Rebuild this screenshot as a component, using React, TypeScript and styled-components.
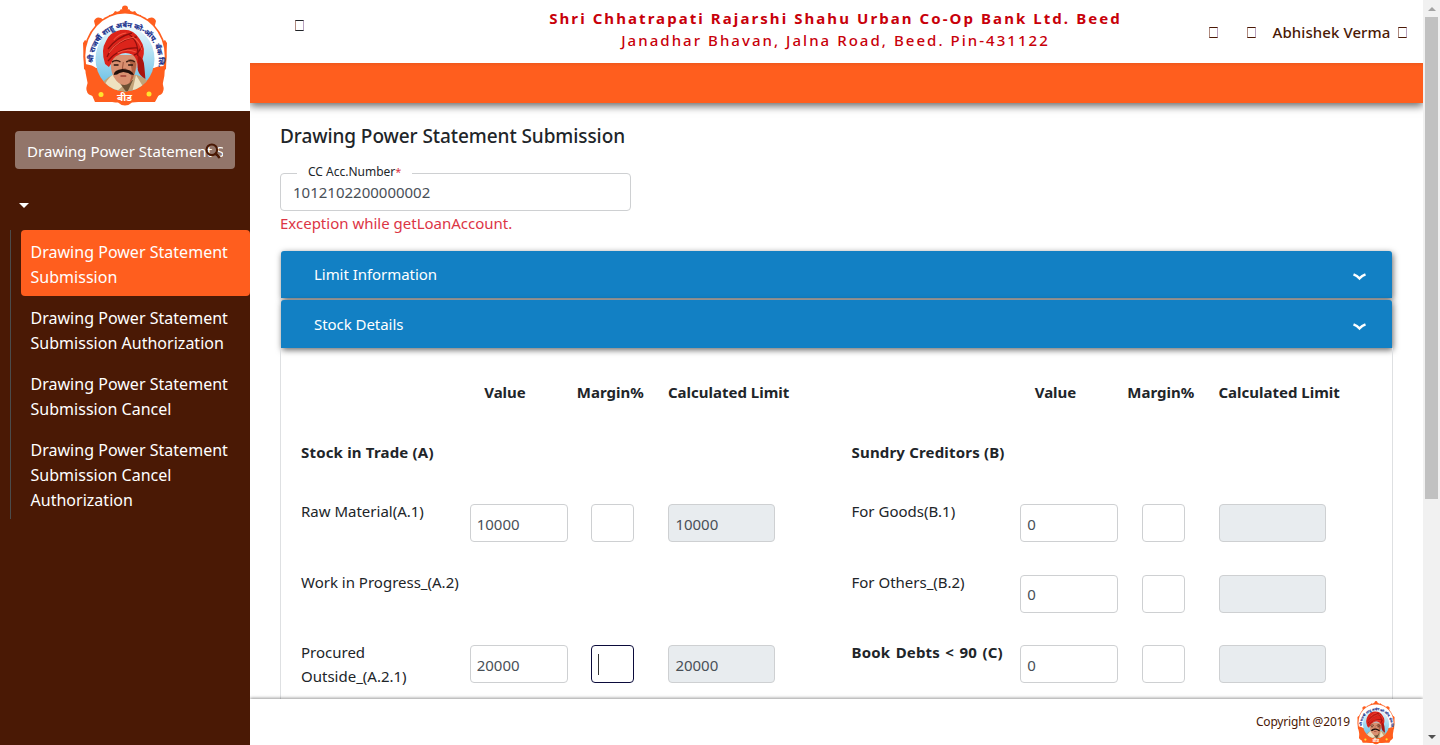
import React from 'react';
import styled, { createGlobalStyle, css } from 'styled-components';

const colors = {
  brand: '#ff5e1e',
  brown: '#4a1905',
  blue: '#1280c4',
  red: '#c8000a',
  text: '#212529',
  input: '#495057',
  border: '#ced0d2',
};

const GlobalStyle = createGlobalStyle`
  *, *::before, *::after { box-sizing: border-box; }
  body {
    margin: 0;
    overflow: hidden;
    background: #fff;
    color: ${colors.text};
    font: 400 15px/24px "Noto Sans", "Open Sans", sans-serif;
  }
  input { font: inherit; }
`;

/* ---------- shell ---------- */

const Shell = styled.div`
  display: flex;
  height: 745px;
  overflow: hidden;
`;

const Sidebar = styled.aside`
  width: 250px;
  flex: none;
  background: ${colors.brown};
  color: #fff;
`;

const LogoPanel = styled.div`
  height: 111px;
  padding-left: 70px;
  background: #fff;
`;

const SearchBox = styled.div`
  position: relative;
  margin: 20px 15px 0;
  height: 38px;
  padding: 0 12px;
  border-radius: 4px;
  background: #92756a;
`;

const SearchInput = styled.input`
  display: block;
  width: 196px;
  height: 38px;
  padding: 2px 0 0;
  border: 0;
  outline: none;
  background: transparent;
  color: #fff;
  letter-spacing: 0.02px;
`;

const SearchIcon = styled.svg`
  position: absolute;
  left: 190px;
  top: 12px;
`;

const MenuToggle = styled.div`
  height: 61px;
  padding: 34px 0 0 19px;
`;

const Caret = styled.div`
  width: 0;
  border: 5.5px solid transparent;
  border-top: 5px solid #fff;
  border-bottom: 0;
`;

const Menu = styled.nav`
  margin-left: 10px;
  padding-left: 10px;
  height: 289px;
  border-left: 1px solid #4b4b4b;
`;

const MenuItem = styled.div<{ $active?: boolean }>`
  padding: 10px 9px 6px 9.5px;
  border-radius: 4px;
  font-size: 16px;
  line-height: 25px;
  letter-spacing: 0.02px;
  background: ${p => (p.$active ? colors.brand : 'transparent')};
`;

const Page = styled.div`
  flex: 1;
  min-width: 0;
  display: flex;
  flex-direction: column;
`;

/* ---------- header ---------- */

const Header = styled.header`
  flex: none;
  height: 63px;
  display: flex;
  padding: 0 16.5px 0 44.5px;
`;

const MissingGlyph = styled.i`
  flex: none;
  width: 9px;
  height: 11px;
  border: 1px solid currentColor;
  border-left-color: #b08b80;
  border-right-color: #b9a3c0;
`;

const MenuButton = styled.div`
  width: 200px;
  padding-top: 20px;
`;

const BankName = styled.div`
  flex: 1;
  padding-top: 7px;
  text-align: center;
  white-space: nowrap;
  line-height: 22px;
  letter-spacing: 2.04px;
  font-weight: 500;
  color: ${colors.red};

  strong {
    display: block;
    font-weight: 700;
    letter-spacing: 2.07px;
  }
`;

const UserArea = styled.div`
  width: 230px;
  height: 65px;
  display: flex;
  align-items: center;
  justify-content: flex-end;
  color: ${colors.brown};
`;

const UserName = styled.span`
  margin: 0 7px 2px 17px;
  font-weight: 500;
  letter-spacing: 0.08px;
`;

const HeaderGap = styled.span`
  width: 29px;
`;

const BrandBar = styled.div`
  flex: none;
  height: 40px;
  background: linear-gradient(#f0581c, ${colors.brand} 4px);
  box-shadow: 0 3px 8px rgba(0, 0, 0, 0.6);
  clip-path: inset(0 0 -20px 0);
`;

/* ---------- content ---------- */

const Content = styled.main`
  flex: 1;
  min-height: 0;
  overflow: hidden;
  padding: 19px 30px 0;
`;

const Title = styled.h1`
  margin: 0 0 23px;
  font-size: 19px;
  line-height: 28px;
  font-weight: 500;
  letter-spacing: -0.08px;
`;

const AccountField = styled.div`
  position: relative;
  width: 351px;
`;

const FieldLabel = styled.label`
  position: absolute;
  left: 17px;
  top: -10px;
  padding: 0 11px;
  background: #fff;
  font-size: 12px;
  line-height: 18px;

  em {
    color: #dc3545;
    font-style: normal;
    font-size: 11px;
  }
`;

const Input = styled.input<{ $width: number; $wide?: boolean; $off?: boolean; $focused?: boolean }>`
  display: block;
  width: ${p => p.$width}px;
  height: 38px;
  padding: ${p => (p.$wide ? '0 12px 1px' : '1px 6px 0')};
  border: 1px solid ${colors.border};
  border-radius: 4px;
  outline: none;
  color: ${colors.input};
  background: ${p => (p.$off ? '#e8ecef' : '#fff')};
  ${p => p.$focused && css`border-color: #0b0b3b;`}
`;

const ErrorText = styled.div`
  height: 40px;
  color: #dc3545;
`;

const AccordionHead = styled.div<{ $height: number }>`
  height: ${p => p.$height}px;
  margin: 0 1px ${p => (p.$height === 47 ? 2 : 0)}px;
  padding: 0 26px 1px 33px;
  display: flex;
  align-items: center;
  justify-content: space-between;
  border-radius: 3px 3px 0 0;
  background: ${colors.blue};
  box-shadow: 1px 2px 6px rgba(0, 0, 0, 0.6);
  color: #fff;
  letter-spacing: -0.05px;
`;

const StockPanel = styled.section`
  height: 480px;
  display: grid;
  grid-template-columns: 550.5px 1fr;
  padding: 28px 0 0 20px;
  border: 1px solid #dee0e2;
  border-width: 0 1px;
`;

const LineRow = styled.div<{ $height: number }>`
  height: ${p => p.$height}px;
  display: grid;
  grid-template-columns: 168.7px 121.6px 77.1px 150px;
`;

const RowLabel = styled.div<{ $bold?: boolean; $spread?: boolean }>`
  font-weight: ${p => (p.$bold ? 700 : 400)};
  letter-spacing: ${p => (p.$bold ? 0.18 : 0)}px;
  word-spacing: ${p => (p.$spread ? 1.3 : 0)}px;
  white-space: pre;
`;

const HeadCell = styled.div<{ $shift: number }>`
  padding-left: ${p => p.$shift}px;
  margin-left: ${p => (p.$shift ? -0.5 : -14.5)}px;
  padding-top: 4px;
  font-weight: 700;
  white-space: nowrap;
`;

const Cell = styled.div`
  position: relative;
  padding-top: 5px;
`;

const TextCursor = styled.span`
  position: absolute;
  left: 7px;
  top: 14px;
  width: 1px;
  height: 21px;
  background: #333;
`;

/* ---------- footer and scrollbar ---------- */

const Footer = styled.footer`
  position: relative;
  flex: none;
  height: 46px;
  display: flex;
  align-items: center;
  justify-content: flex-end;
  gap: 3px;
  padding-right: 24px;
  background: #fff;
  box-shadow: 0 -1px 3px rgba(0, 0, 0, 0.4);
  clip-path: inset(-10px 0 0 0);
  color: ${colors.brown};
  font-size: 12px;
  letter-spacing: -0.17px;
`;

const Scrollbar = styled.div`
  width: 17px;
  flex: none;
  display: flex;
  flex-direction: column;
  align-items: center;
  justify-content: space-between;
  background: #f1f1f1;
`;

const ScrollArrow = styled.div<{ $down?: boolean }>`
  height: 17px;
  display: flex;
  align-items: center;

  &::before {
    content: '';
    border: 4px solid transparent;
    ${p =>
      p.$down
        ? 'border-top-color: #505050; border-bottom: 0;'
        : 'border-bottom-color: #a3a3a3; border-top: 0;'}
  }
`;

const ScrollThumb = styled.div`
  width: 13px;
  height: 482px;
  margin-bottom: auto;
  background: #c1c1c1;
`;

/* ---------- drawings ---------- */

function BankLogo({ width, height, id, viewBox }: { width: number; height: number; id: string; viewBox: string }) {
  return (
    <svg width={width} height={height} viewBox={viewBox} preserveAspectRatio="none">
      <defs>
        <path id={`${id}-arc`} d="M23 66A33 35.5 0 1 1 88.5 68" />
        <clipPath id={`${id}-clip`}>
          <ellipse cx="55" cy="59" rx="29.5" ry="32.5" />
        </clipPath>
        <linearGradient id={`${id}-sky`} x1="0" y1="0" x2="0" y2="1">
          <stop offset="0" stopColor="#eef9fd" />
          <stop offset="1" stopColor="#58b9e2" />
        </linearGradient>
      </defs>
      <g fill={colors.brand}>
        <circle cx="55" cy="8.5" r="3" />
        <path d="M39 15q4 0 6-4q4 2 6-2q2 2 4-1q2 3 4 1q2 4 6 2q2 4 6 4v4H39z" />
        <path d="M24 21q2-5 7-3l4 3-9 8zM86 21q-2-5-7-3l-4 3 9 8z" />
        <path d="M13 43l2-3 3 2v30l-4-3zM97 43l-2-3-3 2v30l4-3z" />
        <path d="M17 85q-2 6 2 9.500q3 2 8 2q5 0 8 4q8 2 13 2q3 3 7 3q4 0 7-3q6 0 13-2q3-4 8-4q5 0 8-2q4-3.500 2-9.500q-3-5 0-11H17q3 6 0 11z" />
        <ellipse cx="55" cy="56.5" rx="41.5" ry="44.5" />
      </g>
      <ellipse cx="55" cy="56" rx="39.7" ry="42.5" fill="#fff" />
      <path d="M15 64q8 1 11 4h58q3-2 11-2q0 20-10 36H25Q15 82 15 64z" fill={colors.brand} />
      <g clipPath={`url(#${id}-clip)`}>
        <rect x="24" y="26" width="62" height="67" fill={`url(#${id}-sky)`} />
        <path d="M28 93q3-14 17-19l22 1q13 4 18 18z" fill="#c3a378" />
        <path d="M45 73l8 13-8 7H31q4-13 14-20zM66 75l-4 18h15z" fill="#eee1c0" />
        <path d="M49 82l8 11 6-13z" fill="#6d5134" />
      </g>
      <g transform="translate(1.5 1) scale(.96 1)">
        <path d="M41 54q-1 16 3 22q5 8 11 8t9-7q5-9 5-23z" fill="#d99070" />
        <path d="M59 58q10-1 8 9q-2 11-7 16q6-15-1-25z" fill="#b26344" />
        <path d="M42 61q5-3 9 0M57 61q5-3 9 0" fill="none" stroke="#3b1d12" strokeWidth="1.5" />
        <path d="M44 64h5M59 64h5" stroke="#29130d" strokeWidth="1.6" />
        <path d="M54 61l-1 7h4" fill="none" stroke="#9d5139" />
        <path d="M44 74q0-5 9-6q10 0 12 6q-4 0-6-2l-5-1-4 1q-2 2-6 2z" fill="#22100b" />
        <path d="M51 75h6" stroke="#93302a" strokeWidth="1.3" />
        <path d="M35 63q-5-14 1-23q4-9 15-11q13-2 20 9q7 9 3 20q-1 6-5 9q0-9-5-13q-8-4-15 0q-6 2-8 9l-2 3z" fill="#dc241b" />
        <path d="M69 54q7 3 7 13l1 11q-6-3-8-9z" fill="#a9150f" />
        <g fill="none" stroke="#8e0f0c" strokeWidth="1.3">
          <path d="M37 56q8-17 31-20M38 48q9-12 25-16M38 60q12-14 31-13M59 33q11 6 10 22M73 45q-3 8-8 9" />
        </g>
        <g fill="none" stroke="#f4543f" strokeWidth="1.1">
          <path d="M39 52q9-13 26-16M44 39q5-6 13-7M48 52q10-5 19-1M64 36q8 6 9 13" />
        </g>
      </g>
      <text fill="#17308c" stroke="#17308c" strokeWidth=".2" fontSize="7" fontWeight="700" fontFamily="Noto Sans, sans-serif">
        <textPath href={`#${id}-arc`} startOffset="3" textLength="112" lengthAdjust="spacingAndGlyphs">
          श्री राजर्षी शाहू अर्बन को-ऑप. बँक लि.
        </textPath>
      </text>
      <circle cx="31" cy="94.5" r="2.5" fill="#ffe52e" />
      <circle cx="79" cy="94" r="2.5" fill="#ffe52e" />
      <text x="54.500" y="101" textAnchor="middle" fill="#fff" fontSize="10" fontWeight="700" fontFamily="Noto Sans, sans-serif">
        बीड
      </text>
    </svg>
  );
}

const Chevron = () => (
  <svg width="14" height="8" viewBox="0 0 14 8" transform="translate(0.5 3)">
    <path d="M1 1.4Q4.5 2.8 7 5.4Q9.5 2.8 13 1.4" fill="none" stroke="#fff" strokeWidth="2.5" />
  </svg>
);

/* ---------- data ---------- */

type Line = { label: string; bold?: boolean; value?: string; calc?: string; focused?: boolean };

const stock: Line[] = [
  { label: 'Raw Material(A.1)', value: '10000', calc: '10000' },
  { label: 'Work in Progress_(A.2)' },
  { label: 'Procured\nOutside_(A.2.1)', value: '20000', calc: '20000', focused: true },
];

const creditors: Line[] = [
  { label: 'For Goods(B.1)', value: '0', calc: '' },
  { label: 'For Others_(B.2)', value: '0', calc: '' },
  { label: 'Book Debts < 90 (C)', bold: true, value: '0', calc: '' },
];

const menu = [
  'Drawing Power Statement Submission',
  'Drawing Power Statement Submission Authorization',
  'Drawing Power Statement Submission Cancel',
  'Drawing Power Statement Submission Cancel Authorization',
];

function Ledger({ heading, lines }: { heading: string; lines: Line[] }) {
  return (
    <div>
      <LineRow $height={64}>
        <span />
        <HeadCell $shift={15}>Value</HeadCell>
        <HeadCell $shift={0}>Margin%</HeadCell>
        <HeadCell $shift={0.1}>Calculated Limit</HeadCell>
      </LineRow>
      <LineRow $height={59}>
        <RowLabel $bold>{heading}</RowLabel>
      </LineRow>
      {lines.map(line => (
        <LineRow key={line.label} $height={70.5}>
          <RowLabel $bold={line.bold} $spread={line.bold}>{line.label}</RowLabel>
          {line.value !== undefined && (
            <>
              <Cell><Input $width={98} defaultValue={line.value} /></Cell>
              <Cell>
                <Input $width={43} $focused={line.focused} />
                {line.focused && <TextCursor />}
              </Cell>
              <Cell><Input $width={107} $off readOnly value={line.calc} /></Cell>
            </>
          )}
        </LineRow>
      ))}
    </div>
  );
}

export default function App() {
  return (
    <>
      <GlobalStyle />
      <Shell>
        <Sidebar>
          <LogoPanel>
            <BankLogo width={110} height={111} id="main" viewBox="0 0 110 111" />
          </LogoPanel>
          <SearchBox>
            <SearchInput defaultValue="Drawing Power Statement Submission" />
            <SearchIcon width="16" height="16" viewBox="0 0 16 16">
              <circle cx="6.8" cy="6.8" r="5.3" fill="none" stroke={colors.brown} strokeWidth="2.1" />
              <path d="M10.5 10.5l4.3 4.3" stroke={colors.brown} strokeWidth="2.6" />
            </SearchIcon>
          </SearchBox>
          <MenuToggle><Caret /></MenuToggle>
          <Menu>
            {menu.map((item, i) => <MenuItem key={item} $active={i === 0}>{item}</MenuItem>)}
          </Menu>
        </Sidebar>
        <Page>
          <Header>
            <MenuButton><MissingGlyph as="div" /></MenuButton>
            <BankName>
              <strong>Shri Chhatrapati Rajarshi Shahu Urban Co-Op Bank Ltd. Beed</strong>
              Janadhar Bhavan, Jalna Road, Beed. Pin-431122
            </BankName>
            <UserArea>
              <MissingGlyph />
              <HeaderGap />
              <MissingGlyph />
              <UserName>Abhishek Verma</UserName>
              <MissingGlyph />
            </UserArea>
          </Header>
          <BrandBar />
          <Content>
            <Title>Drawing Power Statement Submission</Title>
            <AccountField>
              <Input $width={351} $wide defaultValue="1012102200000002" />
              <FieldLabel>CC Acc.Number<em>*</em></FieldLabel>
            </AccountField>
            <ErrorText>Exception while getLoanAccount.</ErrorText>
            <AccordionHead $height={47}>Limit Information<Chevron /></AccordionHead>
            <AccordionHead $height={48}>Stock Details<Chevron /></AccordionHead>
            <StockPanel>
              <Ledger heading="Stock in Trade (A)" lines={stock} />
              <Ledger heading="Sundry Creditors (B)" lines={creditors} />
            </StockPanel>
          </Content>
          <Footer>
            Copyright @2019
            <BankLogo width={46} height={46} id="small" viewBox="3 1 104 106" />
          </Footer>
        </Page>
        <Scrollbar>
          <ScrollArrow />
          <ScrollThumb />
          <ScrollArrow $down />
        </Scrollbar>
      </Shell>
    </>
  );
}
